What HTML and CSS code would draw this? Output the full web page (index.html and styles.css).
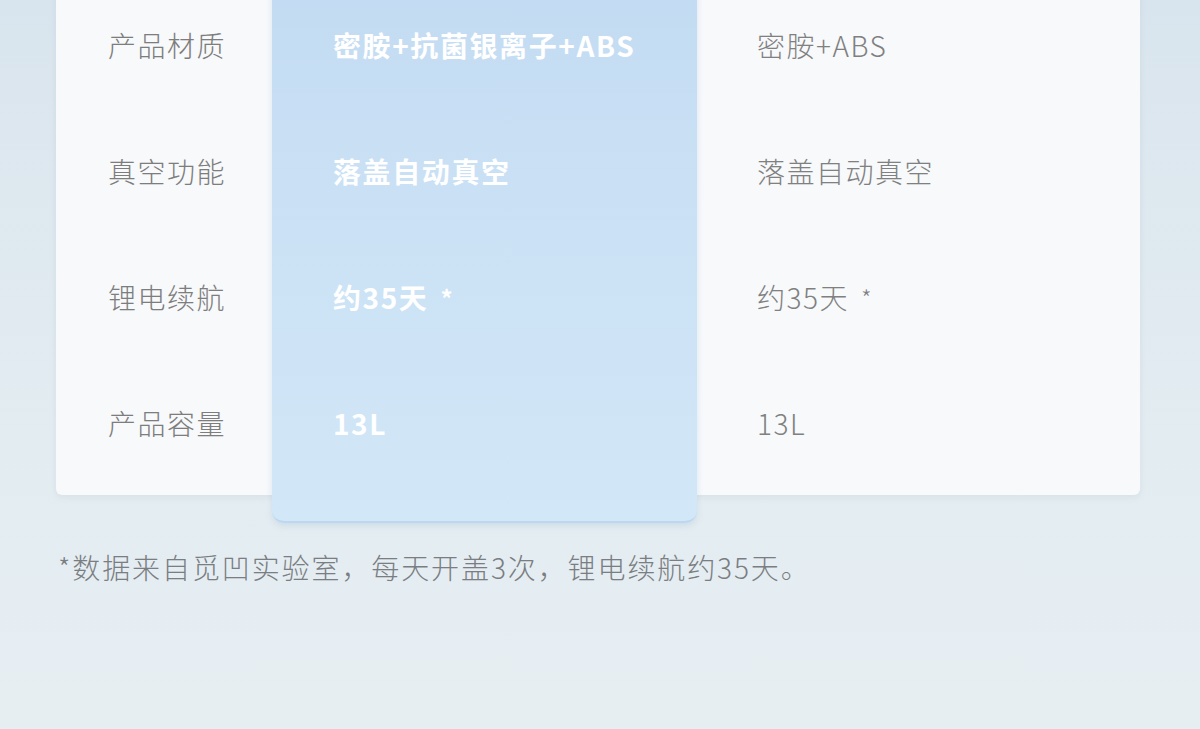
FILE: index.html
```html
<!DOCTYPE html>
<html lang="zh-CN">

<head>
    <meta charset="UTF-8">
    <meta name="viewport" content="width=device-width, initial-scale=1.0">
    <title>产品对比</title>
    <link rel="stylesheet" href="styles.css">
</head>

<body>
    <div class="page">
        <div class="compare">
            <div class="col labels">
                <div class="cell">产品材质</div>
                <div class="cell">真空功能</div>
                <div class="cell">锂电续航</div>
                <div class="cell">产品容量</div>
            </div>
            <div class="col highlight">
                <div class="cell">密胺+抗菌银离子+ABS</div>
                <div class="cell">落盖自动真空</div>
                <div class="cell">约35天 <span class="star">*</span></div>
                <div class="cell">13L</div>
            </div>
            <div class="col other">
                <div class="cell">密胺+ABS</div>
                <div class="cell">落盖自动真空</div>
                <div class="cell">约35天 <span class="star">*</span></div>
                <div class="cell">13L</div>
            </div>
        </div>

        <p class="note">*数据来自觅凹实验室，每天开盖3次，锂电续航约35天。</p>
    </div>
</body>

</html>
```

FILE: styles.css
```css
/* Reset default */
body,
p,
div {
    margin: 0;
    padding: 0;
    box-sizing: border-box;
}

body {
    width: 1200px;
    height: 729px;
    overflow: hidden;
    font-family: "Noto Sans CJK SC", "Noto Sans", sans-serif;
    background: linear-gradient(180deg, #d9e5ee 0%, #e3ecf1 60%, #e6eef2 100%);
}

.page {
    padding: 0 60px 0 56px;
}

/* Comparison card */
.compare {
    display: flex;
    align-items: flex-start;
    width: 1084px;
    margin-top: -18px;
    padding-bottom: 7px;
    background-color: #f7f9fb;
    border-radius: 0 0 6px 6px;
    box-shadow: 0 2px 6px rgba(120, 140, 160, 0.12);
}

.col {
    display: flex;
    flex-direction: column;
}

.cell {
    height: 126px;
    display: flex;
    align-items: center;
    font-size: 28px;
    letter-spacing: 1.5px;
    white-space: nowrap;
}

.star {
    margin-left: 12px;
    font-size: 24px;
}

.labels {
    width: 216px;
    padding-left: 52px;
    color: #7d7d7d;
    font-weight: 300;
}

.highlight {
    width: 425px;
    padding-left: 61px;
    padding-bottom: 35px;
    margin-bottom: -35px;
    color: #ffffff;
    font-weight: 700;
    background: linear-gradient(180deg, #c3dbf2 0%, #cae1f5 40%, #d2e7f7 100%);
    border-bottom: 2px solid #bcd8f0;
    border-radius: 0 0 12px 12px;
    box-shadow: 0 3px 6px rgba(110, 150, 190, 0.18);
}

.highlight .cell {
    letter-spacing: 1.6px;
}

.other {
    flex: 1;
    padding-left: 60px;
    color: #808080;
    font-weight: 300;
}

/* Footnote */
.note {
    margin-top: 52px;
    margin-left: 2px;
    font-size: 28px;
    font-weight: 300;
    line-height: 40px;
    letter-spacing: 1.9px;
    color: #7a7e82;
}
```
